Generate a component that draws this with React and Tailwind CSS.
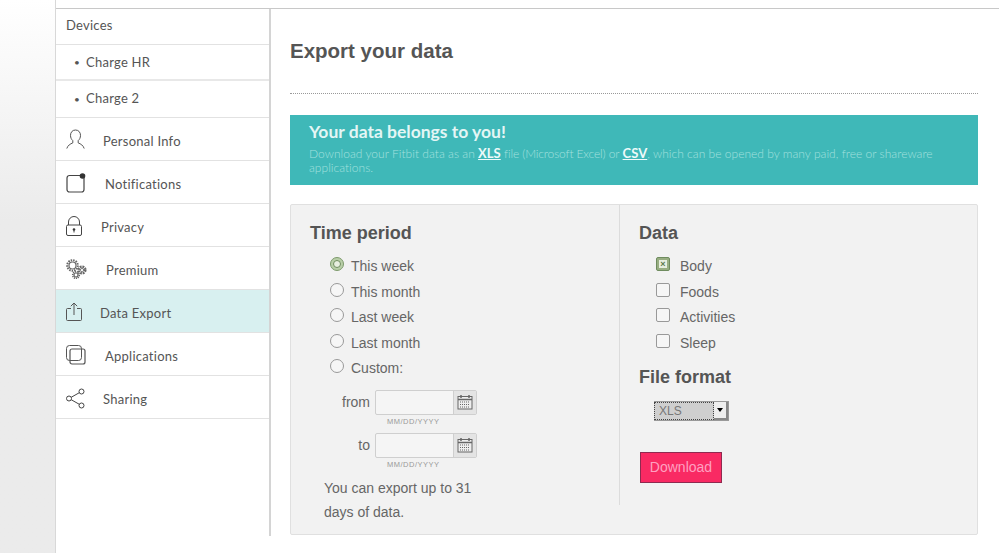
import { Fragment } from 'react';

const PersonIcon = () => (
  <svg width="20" height="22" viewBox="0 0 20 22" fill="none" stroke="#555" strokeWidth="1">
    <path d="M9.500 1c-3.200 0-5 2.500-5 5.300 0 2.400 1 4.300 2.300 5.300v2.300c-2.600 1-5 2.500-6 5.600M9.500 1c3.200 0 5 2.500 5 5.300 0 2.400-1 4.300-2.300 5.300v2.300c2.600 1 5 2.500 6 5.600" />
  </svg>
);

const NotificationIcon = () => (
  <svg width="20" height="20" viewBox="0 0 20 20" fill="none">
    <rect x="1" y="2.500" width="17" height="16.500" rx="2.500" stroke="#444" strokeWidth="1.200" />
    <circle cx="16.500" cy="3" r="2.800" fill="#333" />
  </svg>
);

const LockIcon = () => (
  <svg width="17" height="20" viewBox="0 0 17 20" fill="none" stroke="#444" strokeWidth="1">
    <path d="M2.500 9V6a5.500 5.500 0 0 1 11 0v3" />
    <rect x="0.500" y="9" width="15" height="10.500" rx="1.500" />
    <circle cx="8" cy="13.500" r="1.300" fill="#333" stroke="none" />
    <path d="M8 14v2.500" />
  </svg>
);

const GearsIcon = () => (
  <svg width="21" height="21" viewBox="0 0 21 21" fill="none" stroke="#666">
    <circle cx="6.500" cy="6.500" r="3.500" strokeWidth="1.200" />
    <circle cx="6.500" cy="6.500" r="5.300" strokeWidth="2" strokeDasharray="1.500 1" />
    <circle cx="16" cy="11" r="2.800" strokeWidth="3.500" strokeDasharray="1.500 0.700" />
    <circle cx="10" cy="16" r="2" strokeWidth="1.200" />
    <circle cx="10" cy="16" r="3.300" strokeWidth="1.600" strokeDasharray="1.200 0.800" />
  </svg>
);

const ExportIcon = () => (
  <svg width="16" height="20" viewBox="0 0 16 20" fill="none" stroke="#555" strokeWidth="1">
    <path d="M5 6.500H1.500a1 1 0 0 0-1 1v10a1 1 0 0 0 1 1h13a1 1 0 0 0 1-1v-10a1 1 0 0 0-1-1H11" />
    <path d="M8 13V1M4.800 4.200 8 1l3.200 3.200" />
  </svg>
);

const AppsIcon = () => (
  <svg width="20" height="20" viewBox="0 0 20 20" fill="none" stroke="#555" strokeWidth="1">
    <rect x="0.500" y="0.500" width="15" height="15" rx="3" />
    <rect x="4" y="4" width="15" height="15" rx="2" strokeWidth="1.200" />
  </svg>
);

const ShareIcon = () => (
  <svg width="19" height="21" viewBox="0 0 19 21" fill="none" stroke="#444" strokeWidth="1">
    <circle cx="3" cy="10.500" r="2.500" />
    <circle cx="15.500" cy="3.500" r="2.500" />
    <circle cx="15.500" cy="17.500" r="2.500" />
    <path d="m5.200 9.300 8.100-4.600M5.200 11.700l8.100 4.600" />
  </svg>
);

const CalendarIcon = () => (
  <svg width="16" height="16" viewBox="0 0 16 16" fill="none" stroke="#666">
    <rect x="1" y="2.500" width="14" height="12.500" fill="#eee" />
    <path d="M1 5.500h14" strokeWidth="1.500" />
    <path d="M4 1v3M12 1v3" strokeWidth="1.500" />
    <path d="M3 8h10M3 10.500h10M3 13h10" strokeDasharray="1 1" />
  </svg>
);

const menuItems = [
  { label: 'Personal Info', icon: PersonIcon, textClass: 'pl-[37px]' },
  { label: 'Notifications', icon: NotificationIcon, textClass: 'pl-[39px]' },
  { label: 'Privacy', icon: LockIcon, textClass: 'pl-[35px]' },
  { label: 'Premium', icon: GearsIcon, textClass: 'pl-[40px]' },
  { label: 'Data Export', icon: ExportIcon, active: true, textClass: 'pl-[34px]' },
  { label: 'Applications', icon: AppsIcon, textClass: 'pl-[39px]' },
  { label: 'Sharing', icon: ShareIcon, textClass: 'pl-[37px]' },
];

const periods = ['This week', 'This month', 'Last week', 'Last month', 'Custom:'];
const dataTypes = ['Body', 'Foods', 'Activities', 'Sleep'];

function DateField({ label }) {
  return (
    <div>
      <div className="flex items-center">
        <span className="w-[65px] pr-[5px] text-right">{label}</span>
        <div className="flex h-[25px] w-[102px] rounded-[2px] border border-[#cfcfcf] bg-[#f5f5f5]">
          <div className="flex-1" />
          <div className="flex w-[23px] items-center justify-center border-l border-[#cfcfcf] bg-[#e4e4e4]">
            <CalendarIcon />
          </div>
        </div>
      </div>
      <div className="h-[18px] pl-[77px] text-[7.500px] leading-[14px] tracking-[0.5px] text-[#999]">MM/DD/YYYY</div>
    </div>
  );
}

export default function App() {
  return (
    <div className="flex h-[553px] w-[999px] overflow-hidden bg-white font-['Liberation_Sans',sans-serif] text-[#555]">
      {/* gutter */}
      <div className="w-[56px] shrink-0 border-r border-[#d8d8d8] bg-linear-to-b from-white to-[#ebebeb] to-40%" />

      <div className="flex-1">
        <div className="h-[9px] border-b border-[#c8c8c8]" />
        <div className="flex">
          {/* Sidebar */}
          <div className="h-[527px] w-[215px] shrink-0 border-r-2 border-[#d4d4d4] font-['Lato',sans-serif] text-[13px] tracking-[0.25px] text-[#555]">
            <div className="flex h-[36px] items-center border-b border-[#e2e2e2] pb-[1px] pl-[10px]">Devices</div>
            <div className="flex h-[36px] items-center border-b-2 border-[#e8e8e8] pt-[1px] pl-[18px]">
              <span className="w-[12px] text-[10px]">•</span>Charge HR
            </div>
            <div className="flex h-[37px] items-center border-b border-[#e2e2e2] pl-[18px]">
              <span className="w-[12px] text-[10px]">•</span>Charge 2
            </div>
            {menuItems.map((item) => {
              const Icon = item.icon;
              return (
                <div
                  key={item.label}
                  className={`flex h-[43px] items-center border-b border-[#e2e2e2] pt-[2px] pl-[10px] ${item.active ? 'bg-[#d8f0f0]' : ''}`}
                >
                  <div className="flex w-[21px] justify-start">
                    <Icon />
                  </div>
                  <span className={`-ml-[21px] pt-[4px] ${item.textClass}`}>{item.label}</span>
                </div>
              );
            })}
          </div>

          {/* Main */}
          <div className="box-content w-[688px] pl-[19px]">
            <h1 className="h-[85px] border-b border-dotted border-[#999] pt-[30px] text-[20.500px] leading-[24px] font-bold text-[#555]">
              Export your data
            </h1>
            <div className="mt-[21px] h-[70px] bg-[#3fb8b8] pt-[7px] pl-[19px] font-['Lato',sans-serif]">
              <h2 className="text-[17.500px] leading-[19px] font-bold text-[#e4f6f5]">Your data belongs to you!</h2>
              <p className="mt-[5px] w-[640px] text-[12px] leading-[14px] font-light tracking-[0.03px] text-[#a3e0de]">
                Download your Fitbit data as an <b className="text-[13px] leading-[14px] font-bold text-[#eefafa] underline">XLS</b>{' '}
                <span className="tracking-[-0.15px]">file (Microsoft Excel) or</span>{' '}
                <b className="text-[13px] leading-[14px] font-bold text-[#eefafa] underline">CSV</b>, which can be opened by many paid, free or shareware applications.
              </p>
            </div>

            <div className="mt-[19px] flex h-[331px] rounded-[2px] border border-[#e0e0e0] bg-[#f2f2f2] text-[14px] text-[#666]">
              <div className="h-[300px] w-[329px] border-r border-[#dcdcdc] pt-[17px] pl-[19px]">
                <h3 className="text-[18px] leading-[22px] font-bold text-[#555]">Time period</h3>
                <div className="mt-[10px] pl-[20px]">
                  {periods.map((period, i) => (
                    <div key={period} className="flex h-[25.500px] items-center">
                      <span
                        className={`mr-[7px] -mt-[5px] flex h-[14px] w-[14px] items-center justify-center rounded-full border ${i === 0 ? 'border-[#7d9a6c] bg-[#b9cfa8]' : 'border-[#999] bg-[#f6f6f6]'}`}
                      >
                        {i === 0 && <span className="h-[8px] w-[8px] rounded-full border border-[#6f8c5f] bg-[#e8efe0]" />}
                      </span>
                      {period}
                    </div>
                  ))}
                </div>
                <div className="mt-[8px] flex flex-col">
                  {['from', 'to'].map((label) => (
                    <Fragment key={label}>
                      <DateField label={label} />
                    </Fragment>
                  ))}
                </div>
                <p className="mt-0 w-[175px] pl-[14px] leading-[24px]">You can export up to 31 days of data.</p>
              </div>

              <div className="pt-[17px] pl-[19px]">
                <h3 className="text-[18px] leading-[22px] font-bold text-[#555]">Data</h3>
                <div className="mt-[10px] pl-[17px]">
                  {dataTypes.map((type, i) => (
                    <div key={type} className="flex h-[25.500px] items-center">
                      <span
                        className={`mr-[10px] -mt-[5px] flex h-[14px] w-[14px] items-center justify-center rounded-[2px] border ${i === 0 ? 'border-[#6f8c5f] bg-[#98ae82]' : 'border-[#999] bg-[#f6f6f6]'}`}
                      >
                        {i === 0 && (
                          <span className="flex h-[8px] w-[8px] items-center justify-center bg-[#e8efe0] text-[9px] leading-none font-bold text-[#5d7a4d]">×</span>
                        )}
                      </span>
                      {type}
                    </div>
                  ))}
                </div>
                <h3 className="mt-[10px] text-[18px] leading-[22px] font-bold text-[#555]">File format</h3>
                <div className="mt-[13px] ml-[15px] flex h-[20px] w-[75px] border-y border-r border-[#999] bg-[#cfcfcf]">
                  <div className="flex-1 border border-dotted border-[#444] pl-[4px] text-[12px] leading-[17px] text-[#777]">XLS</div>
                  <div className="flex w-[14px] items-center justify-center border-r-2 border-b-2 border-[#888] bg-[#eee]">
                    <span className="border-x-[3px] border-t-[4px] border-x-transparent border-t-black" />
                  </div>
                </div>
                <button className="mt-[31px] ml-px h-[31px] w-[82px] border border-[#8f2a50] bg-[#f92a63] text-[14px] text-[#ffa0c0]">
                  Download
                </button>
              </div>
            </div>
          </div>
        </div>
      </div>
    </div>
  );
}
